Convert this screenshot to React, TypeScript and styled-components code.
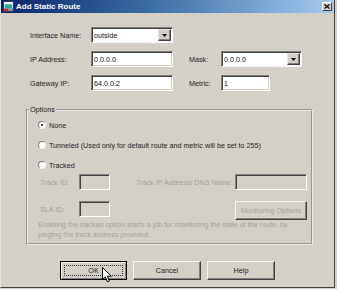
import styled, { createGlobalStyle } from "styled-components"

const GlobalStyle = createGlobalStyle`
  html, body {
    margin: 0;
    padding: 0;
    background: #d4d0c8;
  }
  body {
    font-family: "Liberation Sans", Arial, sans-serif;
  }
`

const Window = styled.div`
  position: relative;
  width: 335px;
  height: 288px;
  box-sizing: border-box;
  border-left: 1px solid #e4e2dc;
  border-right: 1px solid #404040;
  border-bottom: 1px solid #404040;
  background: #d4d0c8;
  display: flex;
  flex-direction: column;
  font-size: 7.2px;
  color: #1c1c1c;
`

const TitleBar = styled.div`
  height: 13px;
  flex-shrink: 0;
  display: flex;
  align-items: center;
  gap: 2px;
  padding: 0 2px 0 2px;
  background: linear-gradient(to right, #0a246a 0%, #3a6ea5 45%, #a6caf0 100%);
`

const TitleText = styled.span`
  flex: 1;
  color: #fff;
  font-weight: bold;
  font-size: 8px;
  line-height: 13px;
`

const CloseButton = styled.div`
  width: 10px;
  height: 9px;
  box-sizing: border-box;
  background: #d4d0c8;
  border-top: 1px solid #fff;
  border-left: 1px solid #fff;
  border-right: 1px solid #404040;
  border-bottom: 1px solid #404040;
  display: flex;
  align-items: center;
  justify-content: center;
`

const FormGrid = styled.div`
  display: grid;
  grid-template-columns: 61px 82px 16px 32px 81px;
  grid-auto-rows: 16px;
  row-gap: 8px;
  padding: 14px 0 0 29px;
`

const Label = styled.span<{ $col?: number; $disabled?: boolean }>`
  grid-column: ${({ $col }) => $col ?? "auto"};
  align-self: center;
  white-space: nowrap;
  color: ${({ $disabled }) => ($disabled ? "#a3a19b" : "#1c1c1c")};
`

const TextInput = styled.input<{ $width?: number; $disabled?: boolean }>`
  box-sizing: border-box;
  width: ${({ $width }) => ($width ? `${$width}px` : "100%")};
  height: 16px;
  margin: 0;
  padding: 0 0 0 2px;
  font: inherit;
  color: #111;
  outline: none;
  background: ${({ $disabled }) => ($disabled ? "#d4d0c8" : "#fff")};
  border-style: solid;
  border-width: 1px;
  border-color: #808080 #fff #fff #808080;
  box-shadow: inset 1px 1px 0 #404040, inset -1px -1px 0 #d4d0c8;
`

const SelectBox = styled.div`
  box-sizing: border-box;
  height: 16px;
  display: flex;
  align-items: stretch;
  background: #fff;
  border-style: solid;
  border-width: 1px;
  border-color: #808080 #fff #fff #808080;
  box-shadow: inset 1px 1px 0 #404040;
  padding: 1px;
`

const SelectValue = styled.span`
  flex: 1;
  display: flex;
  align-items: center;
  padding-left: 1px;
  color: #111;
`

const ArrowButton = styled.span`
  width: 13px;
  box-sizing: border-box;
  background: #d4d0c8;
  border-style: solid;
  border-width: 1px;
  border-color: #e8e6e0 #404040 #404040 #e8e6e0;
  box-shadow: inset -1px -1px 0 #808080;
  display: flex;
  align-items: center;
  justify-content: center;
`

const Group = styled.fieldset`
  box-sizing: border-box;
  width: 287px;
  margin: 14px 0 0 25px;
  padding: 0;
  border: 2px groove #ecebe6;
  min-width: 0;
`

const Legend = styled.legend`
  margin-left: 1px;
  padding: 0 1px;
  line-height: 10px;
`

const GroupBody = styled.div`
  display: flex;
  flex-direction: column;
  padding: 4px 0 3px 10px;
`

const RadioList = styled.div`
  display: flex;
  flex-direction: column;
  gap: 8px;
`

const RadioRow = styled.label`
  height: 12px;
  display: flex;
  align-items: center;
  gap: 3px;
  white-space: nowrap;
`

const RadioDot = styled.span<{ $checked?: boolean }>`
  position: relative;
  width: 8px;
  height: 8px;
  box-sizing: border-box;
  border-radius: 50%;
  background: #fff;
  border-style: solid;
  border-width: 1px;
  border-color: #808080 #f4f3f0 #f4f3f0 #808080;

  &::after {
    content: "";
    display: ${({ $checked }) => ($checked ? "block" : "none")};
    position: absolute;
    left: 2px;
    top: 2px;
    width: 2px;
    height: 2px;
    border-radius: 50%;
    background: #111;
  }
`

const TrackGrid = styled.div`
  display: grid;
  grid-template-columns: 39px 31px 26px 99px 72px;
  grid-template-rows: 16px 16px;
  row-gap: 11px;
  margin-top: 3px;
  padding-left: 2px;
`

const Button = styled.button<{ $width: number; $default?: boolean; $disabled?: boolean }>`
  position: relative;
  box-sizing: border-box;
  width: ${({ $width }) => $width}px;
  height: 19px;
  margin: 0;
  padding: 0;
  font: inherit;
  color: ${({ $disabled }) => ($disabled ? "#a3a19b" : "#1c1c1c")};
  background: #d4d0c8;
  border-style: solid;
  border-width: 1px;
  border-color: ${({ $default }) =>
    $default ? "#000" : "#f4f3f0 #404040 #404040 #f4f3f0"};
  box-shadow: ${({ $default }) =>
    $default
      ? "inset 1px 1px 0 #f4f3f0, inset -1px -1px 0 #808080"
      : "inset -1px -1px 0 #808080"};
  white-space: nowrap;
`

const FocusRing = styled.span`
  position: absolute;
  inset: 3px;
  border: 1px dotted #333;
`

const Description = styled.div`
  margin-top: 3px;
  line-height: 10px;
  white-space: nowrap;
  color: #a3a19b;
`

const ButtonRow = styled.div`
  display: flex;
  justify-content: center;
  gap: 6px;
  margin-top: 16px;
`

const Cursor = styled.svg`
  position: absolute;
  left: 101px;
  top: 267px;
`

function TitleIcon() {
  return (
    <svg width="11" height="11" viewBox="0 0 11 11">
      <rect x="0.5" y="0.5" width="10" height="10" fill="#c8d4e4" stroke="#2a3a5a" />
      <rect x="1" y="1" width="9" height="2" fill="#e8f0ff" />
      <rect x="2" y="3.5" width="7" height="4" fill="#2aa89a" />
      <rect x="1" y="7.5" width="4" height="2.5" fill="#d03030" />
      <rect x="5" y="7.5" width="5" height="2.5" fill="#8090a8" />
    </svg>
  )
}

function DropArrow() {
  return (
    <svg width="5" height="3" viewBox="0 0 5 3">
      <path d="M0 0 H5 L2.5 3 Z" fill="#000" />
    </svg>
  )
}

function Select({ value }: { value: string }) {
  return (
    <SelectBox>
      <SelectValue>{value}</SelectValue>
      <ArrowButton>
        <DropArrow />
      </ArrowButton>
    </SelectBox>
  )
}

export default function App() {
  return (
    <>
      <GlobalStyle />
      <Window>
        <TitleBar>
          <TitleIcon />
          <TitleText>Add Static Route</TitleText>
          <CloseButton>
            <svg width="6" height="5" viewBox="0 0 6 5">
              <path d="M0.5 0.5 L5.5 4.5 M5.5 0.5 L0.5 4.5" stroke="#000" strokeWidth="1.2" />
            </svg>
          </CloseButton>
        </TitleBar>

        <FormGrid>
          <Label>Interface Name:</Label>
          <Select value="outside" />

          <Label $col={1}>IP Address:</Label>
          <TextInput readOnly defaultValue="0.0.0.0" />
          <Label $col={4}>Mask:</Label>
          <Select value="0.0.0.0" />

          <Label $col={1}>Gateway IP:</Label>
          <TextInput readOnly defaultValue="64.0.0.2" />
          <Label $col={4}>Metric:</Label>
          <TextInput readOnly defaultValue="1" $width={49} />
        </FormGrid>

        <Group>
          <Legend>Options</Legend>
          <GroupBody>
            <RadioList>
              <RadioRow>
                <RadioDot $checked />
                None
              </RadioRow>
              <RadioRow>
                <RadioDot />
                Tunneled (Used only for default route and metric will be set to 255)
              </RadioRow>
              <RadioRow>
                <RadioDot />
                Tracked
              </RadioRow>
            </RadioList>

            <TrackGrid>
              <Label $disabled>Track ID:</Label>
              <TextInput readOnly disabled $disabled />
              <span />
              <Label $disabled>Track IP Address/ DNS Name:</Label>
              <TextInput readOnly disabled $disabled />

              <Label $disabled>SLA ID:</Label>
              <TextInput readOnly disabled $disabled />
              <span />
              <span />
              <Button $width={72} $disabled>
                Monitoring Options
              </Button>
            </TrackGrid>

            <Description>
              Enabling the tracked option starts a job for monitoring the state of the route, by
              <br />
              pinging the track address provided.
            </Description>
          </GroupBody>
        </Group>

        <ButtonRow>
          <Button $width={67} $default>
            <FocusRing />
            OK
          </Button>
          <Button $width={68}>Cancel</Button>
          <Button $width={68}>Help</Button>
        </ButtonRow>

        <Cursor width="10" height="16" viewBox="0 0 10 16">
          <path
            d="M0.5 0.5 L0.5 12.5 L3.3 9.8 L5.3 14.8 L7.3 14 L5.4 9.2 L9.3 9.2 Z"
            fill="#fff"
            stroke="#000"
            strokeWidth="1"
          />
        </Cursor>
      </Window>
    </>
  )
}
